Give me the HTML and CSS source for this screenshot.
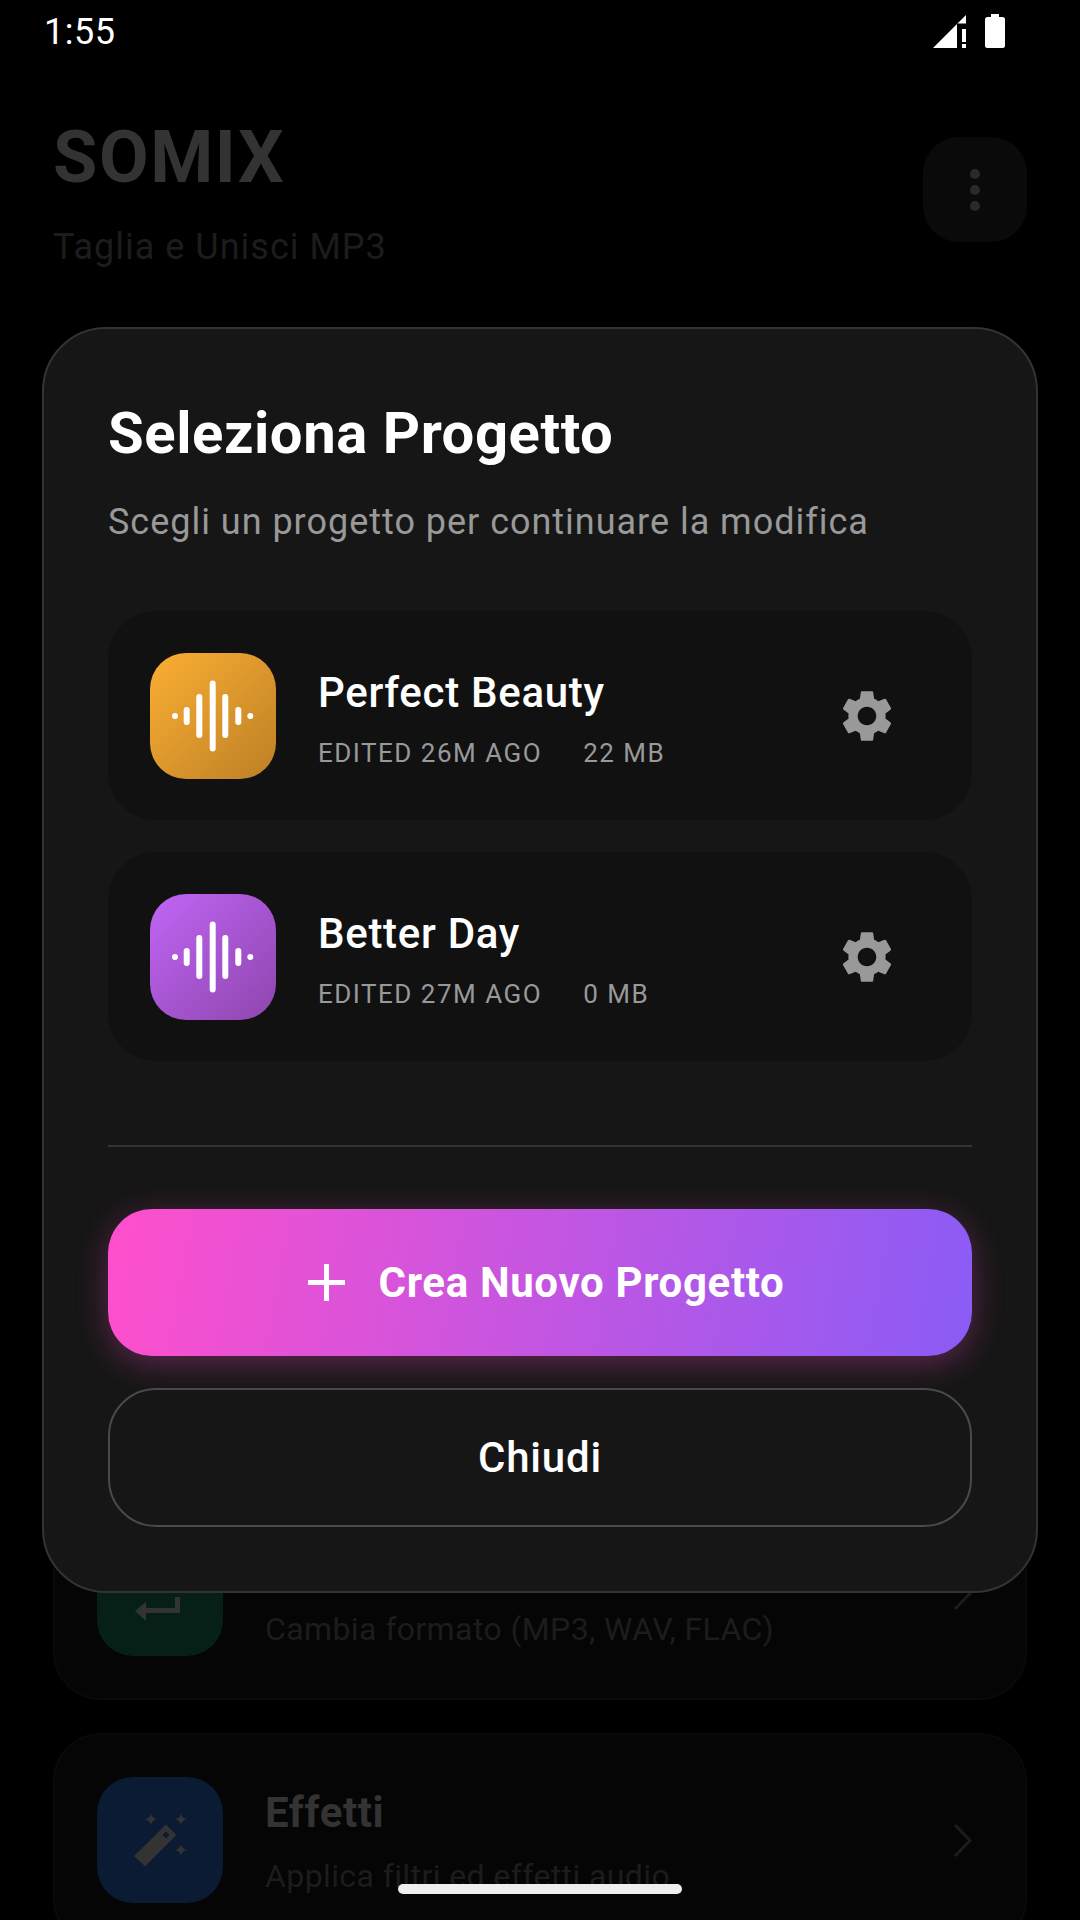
FILE: index.html
```html
<!DOCTYPE html>
<html lang="it">
<head>
<meta charset="utf-8">
<title>SOMIX</title>
<link rel="stylesheet" href="styles.css">
</head>
<body>
<div class="screen">
  <header class="status">
    <span class="clock">1:55</span>
    <div class="status-icons">
      <svg class="ic-signal" viewBox="0 0 33 33"><path d="M33 0v8.500h-9v24.500H0z" fill="#fff"/><rect x="29" y="14" width="4" height="13" fill="#fff"/><rect x="29" y="29" width="4" height="4" fill="#fff"/></svg>
      <svg class="ic-battery" viewBox="0 0 20 34"><path d="M6 0h8v3h3.500A2.500 2.500 0 0 1 20 5.500V31.500A2.500 2.500 0 0 1 17.500 34H2.500A2.500 2.500 0 0 1 0 31.500V5.500A2.500 2.500 0 0 1 2.500 3H6z" fill="#fff"/></svg>
    </div>
  </header>

  <section class="app-head">
    <div>
      <h1 class="brand">SOMIX</h1>
      <p class="tagline">Taglia e Unisci MP3</p>
    </div>
    <div class="menu-btn"><i></i><i></i><i></i></div>
  </section>

  <section class="tools">
    <article class="tool">
      <div class="tool-icon green">
        <svg class="tool-glyph" viewBox="0 0 60 60"><path d="M5 48l11-9v6h29V34h5v16H16v8z" fill="#333"/></svg>
      </div>
      <div class="tool-text">
        <h2>Converti</h2>
        <p>Cambia formato (MP3, WAV, FLAC)</p>
      </div>
      <svg class="chev" viewBox="0 0 19 33"><path d="M2 1l15 15.500L2 32" fill="none" stroke="#1c1c1c" stroke-width="3"/></svg>
    </article>
    <article class="tool">
      <div class="tool-icon navy">
        <svg class="tool-glyph" viewBox="0 0 60 60">
          <path d="M21 3.300Q21.800 8.500 27 9.300Q21.800 10.100 21 15.300Q20.200 10.100 15 9.300Q20.200 8.500 21 3.300zM51 3.300Q51.800 8.500 57 9.300Q51.800 10.100 51 15.300Q50.200 10.100 45 9.300Q50.200 8.500 51 3.300zM51 34Q51.800 39.200 57 40Q51.800 40.800 51 46Q50.200 40.800 45 40Q50.200 39.200 51 34z" fill="#333"/>
          <path d="M36 16L45 25L15 55L5.500 46z" fill="#333" stroke="#333" stroke-width="2" stroke-linejoin="round"/>
          <path d="M36 21.500L39.500 25L36 28.500L32.500 25z" fill="#0a1b33"/>
        </svg>
      </div>
      <div class="tool-text">
        <h2>Effetti</h2>
        <p>Applica filtri ed effetti audio</p>
      </div>
      <svg class="chev" viewBox="0 0 19 33"><path d="M2 1l15 15.500L2 32" fill="none" stroke="#1c1c1c" stroke-width="3"/></svg>
    </article>
  </section>

  <div class="modal">
    <h2 class="modal-title">Seleziona Progetto</h2>
    <p class="modal-sub">Scegli un progetto per continuare la modifica</p>

    <div class="projects">
      <article class="project">
        <div class="thumb amber">
          <svg class="wave" viewBox="0 0 126 126"><path d="M25 63h.01M36.700 57v12M49.300 44v38M62.700 30.500v65M75.300 44v38M88.300 57v12M100.300 63h.01" fill="none" stroke="#fff" stroke-width="6" stroke-linecap="round"/></svg>
        </div>
        <div class="project-info">
          <h3>Perfect Beauty</h3>
          <div class="meta"><span>EDITED 26M AGO</span><span>22 MB</span></div>
        </div>
        <svg class="gear" viewBox="0 0 24 24"><path d="M19.140 12.940c.04-.3.06-.61.06-.94 0-.32-.02-.64-.07-.94l2.030-1.580c.18-.14.23-.41.12-.61l-1.920-3.320c-.12-.22-.37-.29-.59-.22l-2.390.96c-.5-.38-1.030-.7-1.620-.94l-.36-2.540c-.04-.24-.24-.41-.48-.41h-3.840c-.24 0-.43.17-.47.41l-.36 2.540c-.59.24-1.130.57-1.620.94l-2.390-.96c-.22-.08-.47 0-.59.22L2.740 8.870c-.12.21-.08.47.12.61l2.030 1.580c-.05.3-.09.63-.09.94s.02.64.07.94l-2.030 1.580c-.18.14-.23.41-.12.61l1.920 3.320c.12.22.37.29.59.22l2.390-.96c.5.38 1.030.7 1.620.94l.36 2.540c.05.24.24.41.48.41h3.840c.24 0 .44-.17.47-.41l.36-2.540c.59-.24 1.130-.56 1.620-.94l2.390.96c.22.08.47 0 .59-.22l1.920-3.320c.12-.22.07-.47-.12-.61l-2.010-1.580zM12 15.600c-1.980 0-3.600-1.620-3.600-3.600s1.620-3.600 3.600-3.600 3.600 1.620 3.600 3.600-1.620 3.600-3.600 3.600z" fill="#999"/></svg>
      </article>
      <article class="project">
        <div class="thumb violet">
          <svg class="wave" viewBox="0 0 126 126"><path d="M25 63h.01M36.700 57v12M49.300 44v38M62.700 30.500v65M75.300 44v38M88.300 57v12M100.300 63h.01" fill="none" stroke="#fff" stroke-width="6" stroke-linecap="round"/></svg>
        </div>
        <div class="project-info">
          <h3>Better Day</h3>
          <div class="meta"><span>EDITED 27M AGO</span><span>0 MB</span></div>
        </div>
        <svg class="gear" viewBox="0 0 24 24"><path d="M19.140 12.940c.04-.3.06-.61.06-.94 0-.32-.02-.64-.07-.94l2.030-1.580c.18-.14.23-.41.12-.61l-1.920-3.320c-.12-.22-.37-.29-.59-.22l-2.390.96c-.5-.38-1.030-.7-1.620-.94l-.36-2.540c-.04-.24-.24-.41-.48-.41h-3.840c-.24 0-.43.17-.47.41l-.36 2.540c-.59.24-1.130.57-1.620.94l-2.390-.96c-.22-.08-.47 0-.59.22L2.740 8.870c-.12.21-.08.47.12.61l2.030 1.580c-.05.3-.09.63-.09.94s.02.64.07.94l-2.030 1.580c-.18.14-.23.41-.12.61l1.920 3.320c.12.22.37.29.59.22l2.390-.96c.5.38 1.030.7 1.620.94l.36 2.540c.05.24.24.41.48.41h3.840c.24 0 .44-.17.47-.41l.36-2.540c.59-.24 1.130-.56 1.620-.94l2.390.96c.22.08.47 0 .59-.22l1.920-3.320c.12-.22.07-.47-.12-.61l-2.010-1.580zM12 15.600c-1.980 0-3.600-1.620-3.600-3.600s1.620-3.600 3.600-3.600 3.600 1.620 3.600 3.600-1.620 3.600-3.600 3.600z" fill="#999"/></svg>
      </article>
    </div>

    <hr class="divider">

    <div class="btn btn-primary">
      <svg class="plus" viewBox="0 0 37 37"><path d="M18.500 0v37M0 18.500h37" stroke="#fff" stroke-width="5"/></svg>
      <span>Crea Nuovo Progetto</span>
    </div>
    <div class="btn btn-outline">Chiudi</div>
  </div>

  <div class="home-bar"></div>
</div>
</body>
</html>
```

FILE: styles.css
```css
* { box-sizing: border-box; margin: 0; padding: 0; }
html, body { width: 1080px; height: 1920px; background: #000; overflow: hidden; }
body { font-family: Roboto, "Noto Sans", sans-serif; }

.screen { position: relative; width: 1080px; height: 1920px; overflow: hidden; background: #000; }

.status { height: 60px; padding: 0 75px 0 44px; display: flex; align-items: center; justify-content: space-between; color: #fff; }
.clock { font-size: 36px; letter-spacing: 0.5px; padding-top: 4px; }
.status-icons { display: flex; align-items: center; gap: 19px; padding-top: 2px; }
.ic-signal { width: 33px; height: 33px; display: block; }
.ic-battery { width: 20px; height: 34px; display: block; }

.app-head { padding: 60px 53px 0 53px; display: flex; justify-content: space-between; align-items: flex-start; }
.brand { font-size: 72px; line-height: 76px; font-weight: 700; color: #333; letter-spacing: 1.6px; }
.tagline { margin-top: 31px; font-size: 36px; line-height: 40px; color: #1c1c1c; letter-spacing: 1px; }
.menu-btn { margin-top: 17px; width: 104px; height: 105px; border-radius: 36px; background: #0a0a0a; display: flex; flex-direction: column; align-items: center; justify-content: center; gap: 6px; }
.menu-btn i { width: 10px; height: 10px; border-radius: 50%; background: #2a2a2a; display: block; }

.tools { margin: 1219px 53px 0; display: flex; flex-direction: column; gap: 33px; }
.tool { height: 214px; flex: none; padding: 0 53px 0 42px; display: flex; align-items: center; gap: 42px; background: #050505; border: 2px solid #090909; border-radius: 48px; }
.tool-icon { width: 126px; height: 126px; flex: none; border-radius: 36px; display: flex; align-items: center; justify-content: center; }
.green { background: #062018; }
.navy { background: #0a1b33; }
.tool-glyph { width: 60px; height: 60px; display: block; }
.tool-text { flex: 1; padding-top: 3px; }
.tool-text h2 { font-size: 42px; line-height: 48px; font-weight: 700; color: #333; letter-spacing: 0.6px; }
.tool-text p { margin-top: 21px; font-size: 32px; line-height: 36px; color: #1c1c1c; letter-spacing: 0.4px; }
.chev { width: 19px; height: 33px; flex: none; }

.modal { position: absolute; left: 42px; top: 327px; width: 996px; height: 1266px; padding: 60px 64px 0; background: #161616; border: 2px solid #333; border-radius: 64px; }
.modal-title { font-size: 58px; line-height: 88px; font-weight: 700; color: #fff; letter-spacing: 0.55px; }
.modal-sub { margin-top: 23px; font-size: 36px; line-height: 44px; color: #999; letter-spacing: 0.98px; }

.projects { margin-top: 67px; display: flex; flex-direction: column; gap: 32px; }
.project { height: 209px; padding: 0 74px 0 42px; display: flex; align-items: center; background: #111; border-radius: 48px; }
.thumb { width: 126px; height: 126px; flex: none; border-radius: 36px; }
.amber { background: linear-gradient(135deg, #fbae33, #bd8026); }
.violet { background: linear-gradient(135deg, #c065f5, #8e46ad); }
.wave { width: 126px; height: 126px; display: block; }
.project-info { flex: 1; margin-left: 42px; padding-top: 6px; }
.project-info h3 { font-size: 42px; line-height: 48px; font-weight: 500; color: #fff; letter-spacing: 0.7px; }
.meta { margin-top: 20px; display: flex; gap: 41px; font-size: 26px; line-height: 32px; color: #999; letter-spacing: 1.5px; }
.gear { width: 62px; height: 62px; flex: none; }

.divider { margin-top: 84px; height: 2px; border: 0; background: #333; }

.btn { height: 147px; display: flex; align-items: center; justify-content: center; font-size: 42px; font-weight: 700; color: #fff; letter-spacing: 0.65px; }
.btn-primary { margin-top: 62px; padding-left: 12px; gap: 34px; border-radius: 44px; background: linear-gradient(100deg, #ff4fcc, #8a5cf6); box-shadow: 0 8px 32px rgba(255, 79, 204, 0.3); }
.plus { width: 37px; height: 37px; display: block; }
.btn-outline { margin-top: 32px; height: 139px; border: 2px solid #4a4a4a; border-radius: 48px; font-weight: 500; letter-spacing: 0.8px; }

.home-bar { position: absolute; left: 398px; top: 1884px; width: 284px; height: 10px; border-radius: 5px; background: #eee; }
```
